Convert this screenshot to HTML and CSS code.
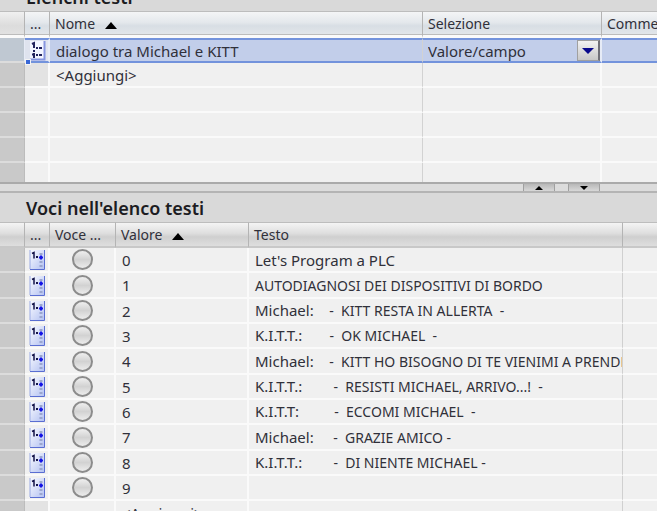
FILE: index.html
```html
<!DOCTYPE html>
<html lang="it">
<head>
    <meta charset="UTF-8">
    <title>Elenchi testi</title>
    <link rel="stylesheet" href="styles.css">
</head>
<body>
    <svg class="defs" aria-hidden="true">
        <defs>
            <linearGradient id="page" x1="0" y1="0" x2="1" y2="1">
                <stop offset="0" stop-color="#fafbff"/>
                <stop offset="1" stop-color="#b4c2f2"/>
            </linearGradient>
        </defs>
        <symbol id="entry" viewBox="0 0 17 21">
            <rect x="1" y="1" width="14" height="19" fill="url(#page)"/>
            <path d="M1 1v19" stroke="#9aaae4"/>
            <path d="M15.500 1v19.500H1" fill="none" stroke="#5a6ed2"/>
            <path d="M3 4.500l2-1v6" fill="none" stroke="#15154a" stroke-width="1.500"/>
            <rect x="7" y="7" width="2" height="2" fill="#15154a"/>
            <path d="M12 4v2M12 12v2M12 16v2" stroke="#9aa6d0" stroke-width="3"/>
            <path d="M12 6.500v4M10 8.500h4" stroke="#1414e6" stroke-width="2"/>
        </symbol>
        <symbol id="list" viewBox="0 0 17 21">
            <rect x="1" y="1" width="14" height="18" fill="#f3f5ff"/>
            <path d="M15.500 1v18.500H1" fill="none" stroke="#8796e0" stroke-width="2"/>
            <path d="M3 4l2-1v5M5 10v2M3 14.500h2M5 13v5" fill="none" stroke="#22225c" stroke-width="2"/>
            <path d="M7 8h2M10 8h3M7 15h2M10 15h3" stroke="#22225c" stroke-width="2"/>
        </symbol>
    </svg>

    <main class="editor">
        <section class="pane lists">
            <h2 class="pane-title">Elenchi testi</h2>
            <table class="grid">
                <colgroup>
                    <col class="c-gutter"><col class="c-icon"><col class="c-name"><col class="c-select"><col>
                </colgroup>
                <thead>
                    <tr>
                        <th></th>
                        <th class="dots">...</th>
                        <th>Nome <svg class="sort" viewBox="0 0 12 7"><path d="M6 0l6 7H0z"/></svg></th>
                        <th>Selezione</th>
                        <th>Commento</th>
                    </tr>
                </thead>
                <tbody>
                    <tr class="selected">
                        <td class="gutter"></td>
                        <td class="icon-cell"><svg class="icon"><use href="#list"/></svg><span class="handle"></span></td>
                        <td>dialogo tra Michael e KITT</td>
                        <td class="select-cell">
                            <select class="combo" aria-label="Selezione"><option>Valore/campo</option></select>
                            <span class="combo-arrow"><svg viewBox="0 0 12 6"><path d="M0 0h12L6 6z"/></svg></span>
                        </td>
                        <td></td>
                    </tr>
                    <tr><td class="gutter"></td><td class="new"></td><td>&lt;Aggiungi&gt;</td><td></td><td></td></tr>
                    <tr><td class="gutter"></td><td></td><td></td><td></td><td></td></tr>
                    <tr><td class="gutter"></td><td></td><td></td><td></td><td></td></tr>
                    <tr><td class="gutter"></td><td></td><td></td><td></td><td></td></tr>
                    <tr><td class="gutter"></td><td></td><td></td><td></td><td></td></tr>
                </tbody>
            </table>
        </section>

        <div class="splitter">
            <button class="split-btn" aria-label="Espandi sopra"><svg viewBox="0 0 8 4"><path d="M4 0l4 4H0z"/></svg></button>
            <button class="split-btn" aria-label="Espandi sotto"><svg viewBox="0 0 8 4"><path d="M0 0h8L4 4z"/></svg></button>
        </div>

        <section class="pane entries">
            <h2 class="pane-title">Voci nell'elenco testi</h2>
            <table class="grid">
                <colgroup>
                    <col class="c-gutter"><col class="c-icon"><col class="c-default"><col class="c-value"><col class="c-text"><col>
                </colgroup>
                <thead>
                    <tr>
                        <th></th>
                        <th class="dots">...</th>
                        <th>Voce ...</th>
                        <th>Valore <svg class="sort" viewBox="0 0 12 7"><path d="M6 0l6 7H0z"/></svg></th>
                        <th>Testo</th>
                        <th></th>
                    </tr>
                </thead>
                <tbody>
                    <tr>
                        <td class="gutter"></td>
                        <td class="icon-cell"><svg class="icon"><use href="#entry"/></svg></td>
                        <td class="radio-cell"><input type="radio" name="voce" aria-label="Voce 0"></td>
                        <td>0</td>
                        <td class="text">Let's Program a PLC</td>
                        <td></td>
                    </tr>
                    <tr>
                        <td class="gutter"></td>
                        <td class="icon-cell"><svg class="icon"><use href="#entry"/></svg></td>
                        <td class="radio-cell"><input type="radio" name="voce" aria-label="Voce 1"></td>
                        <td>1</td>
                        <td class="text"><span class="caps">AUTODIAGNOSI DEI DISPOSITIVI DI BORDO</span></td>
                        <td></td>
                    </tr>
                    <tr>
                        <td class="gutter"></td>
                        <td class="icon-cell"><svg class="icon"><use href="#entry"/></svg></td>
                        <td class="radio-cell"><input type="radio" name="voce" aria-label="Voce 2"></td>
                        <td>2</td>
                        <td class="text">Michael:    <span class="caps">-  KITT RESTA IN ALLERTA  -</span></td>
                        <td></td>
                    </tr>
                    <tr>
                        <td class="gutter"></td>
                        <td class="icon-cell"><svg class="icon"><use href="#entry"/></svg></td>
                        <td class="radio-cell"><input type="radio" name="voce" aria-label="Voce 3"></td>
                        <td>3</td>
                        <td class="text">K.I.T.T.:       <span class="caps">-  OK MICHAEL  -</span></td>
                        <td></td>
                    </tr>
                    <tr>
                        <td class="gutter"></td>
                        <td class="icon-cell"><svg class="icon"><use href="#entry"/></svg></td>
                        <td class="radio-cell"><input type="radio" name="voce" aria-label="Voce 4"></td>
                        <td>4</td>
                        <td class="text">Michael:    <span class="caps">-  KITT HO BISOGNO DI TE VIENIMI A PRENDERE</span></td>
                        <td></td>
                    </tr>
                    <tr>
                        <td class="gutter"></td>
                        <td class="icon-cell"><svg class="icon"><use href="#entry"/></svg></td>
                        <td class="radio-cell"><input type="radio" name="voce" aria-label="Voce 5"></td>
                        <td>5</td>
                        <td class="text">K.I.T.T.:        <span class="caps">-  RESISTI MICHAEL, ARRIVO...!  -</span></td>
                        <td></td>
                    </tr>
                    <tr>
                        <td class="gutter"></td>
                        <td class="icon-cell"><svg class="icon"><use href="#entry"/></svg></td>
                        <td class="radio-cell"><input type="radio" name="voce" aria-label="Voce 6"></td>
                        <td>6</td>
                        <td class="text">K.I.T.T:         <span class="caps">-  ECCOMI MICHAEL  -</span></td>
                        <td></td>
                    </tr>
                    <tr>
                        <td class="gutter"></td>
                        <td class="icon-cell"><svg class="icon"><use href="#entry"/></svg></td>
                        <td class="radio-cell"><input type="radio" name="voce" aria-label="Voce 7"></td>
                        <td>7</td>
                        <td class="text">Michael:     <span class="caps">-  GRAZIE AMICO -</span></td>
                        <td></td>
                    </tr>
                    <tr>
                        <td class="gutter"></td>
                        <td class="icon-cell"><svg class="icon"><use href="#entry"/></svg></td>
                        <td class="radio-cell"><input type="radio" name="voce" aria-label="Voce 8"></td>
                        <td>8</td>
                        <td class="text">K.I.T.T.:        <span class="caps">-  DI NIENTE MICHAEL -</span></td>
                        <td></td>
                    </tr>
                    <tr>
                        <td class="gutter"></td>
                        <td class="icon-cell"><svg class="icon"><use href="#entry"/></svg></td>
                        <td class="radio-cell"><input type="radio" name="voce" aria-label="Voce 9"></td>
                        <td>9</td>
                        <td class="text"></td>
                        <td></td>
                    </tr>
                    <tr>
                        <td class="gutter"></td>
                        <td class="new"></td>
                        <td></td>
                        <td>&lt;Aggiungi&gt;</td>
                        <td class="text"></td>
                        <td></td>
                    </tr>
                </tbody>
            </table>
        </section>
    </main>
</body>
</html>
```
FILE: styles.css
```css
* {
    box-sizing: border-box;
}

body {
    margin: 0;
    height: 100vh;
    overflow: hidden;
    background: #f0f0f0;
    color: #30303a;
    font-family: 'Noto Sans', 'Open Sans', sans-serif;
    font-size: 15px;
    line-height: 20px;
}

.defs {
    position: absolute;
    width: 0;
    height: 0;
}

.editor {
    display: flex;
    flex-direction: column;
    margin-top: -18px;
}

.pane-title {
    margin: 0;
    padding: 5px 26px 4px;
    height: 29px;
    background: #d9d9d9;
    color: #1c1c22;
    font-size: 18px;
    font-weight: 600;
    line-height: 20px;
}

.grid {
    width: 100%;
    table-layout: fixed;
    border-collapse: separate;
    border-spacing: 0;
}

.c-gutter {
    width: 25px;
}

.c-icon {
    width: 25px;
}

.c-name {
    width: 373px;
}

.c-select {
    width: 179px;
}

.c-default {
    width: 66px;
}

.c-value {
    width: 133px;
}

.c-text {
    width: 374px;
}

th {
    height: 26px;
    padding: 0 0 0 5px;
    border-top: 1px solid #bdbdbd;
    border-right: 1px solid #b4b4b4;
    border-bottom: 2px solid #c8c8c8;
    background: linear-gradient(#f4f4f4, #dedede 45%, #cfcfcf 60%, #dedede);
    font-size: 14px;
    font-weight: 400;
    text-align: left;
    white-space: nowrap;
    overflow: hidden;
}

.lists th {
    height: 27px;
    border-bottom: 3px solid #fafafa;
    background: linear-gradient(#f4f5f6, #e4e8ec 45%, #d8dee4 60%, #e2e6ea) padding-box;
    box-shadow: inset 0 -1px #bcbcbc;
}

.lists th:first-child {
    background: linear-gradient(#f0f0f0, #dcdcdc 60%, #e2e2e2) padding-box;
}

th:last-child {
    border-right: none;
}

.sort {
    width: 12px;
    height: 7px;
    margin-left: 6px;
    fill: #000;
}

td {
    height: 25px;
    padding: 0 0 0 6px;
    border-right: 2px solid #fafafa;
    border-bottom: 2px solid #fafafa;
    background: #f0f0f0;
    white-space: nowrap;
    overflow: hidden;
}

.entries tr:nth-child(3n+2) td {
    height: 26px;
}

td:last-child {
    border-right: none;
}

.gutter {
    border-right: 1px solid #bcbcbc;
    border-bottom: 2px solid #dcdcdc;
    background: #c9c9c9;
}

.new {
    background: #e3e3e3;
}

.lists td:nth-child(3) {
    border-right: 1px solid #d2d2d2;
}

.icon-cell {
    padding: 0 0 0 4px;
}

.icon {
    display: block;
    width: 17px;
    height: 21px;
}

.selected td {
    border-top: 2px solid #7393dc;
    border-bottom: 2px solid #7393dc;
    border-right-color: #e6ebf6;
    background: #c2ceea;
}

.selected .gutter {
    border-top-color: #bfc8d2;
    border-bottom-color: #dcdcdc;
    background: #bfc8d2;
}

.selected .icon-cell {
    position: relative;
    background: #dfe3ee;
    overflow: visible;
}

.handle {
    position: absolute;
    left: 0;
    bottom: -4px;
    width: 6px;
    height: 6px;
    border: 1px solid #f4f4f4;
    background: #3867d6;
}

.selected .select-cell {
    position: relative;
    padding: 0;
}

.combo {
    display: block;
    width: 100%;
    height: 21px;
    padding: 0 24px 0 5px;
    border: none;
    background: transparent;
    color: inherit;
    font: inherit;
    appearance: none;
}

.combo-arrow {
    position: absolute;
    top: 0;
    right: 0;
    bottom: 0;
    display: flex;
    align-items: center;
    justify-content: center;
    width: 23px;
    border: 1px solid #a0a0a0;
    border-right: 2px solid #707078;
    background: linear-gradient(#f2f2f2, #c8c8c8);
    pointer-events: none;
}

.combo-arrow svg {
    width: 12px;
    height: 6px;
    fill: #0a0a8c;
}

.splitter {
    display: flex;
    justify-content: flex-end;
    gap: 13px;
    height: 11px;
    padding-right: 57px;
    border-top: 2px solid #aaaaaa;
    border-bottom: 2px solid #b4b4b4;
    background: #dcdcdc;
}

.split-btn {
    display: flex;
    align-items: center;
    justify-content: center;
    width: 32px;
    height: 7px;
    padding: 0;
    border: 1px solid #a0a0a0;
    border-top: none;
    border-bottom: none;
    background: linear-gradient(#b8b8b8, #d8d8d8);
}

.split-btn svg {
    width: 8px;
    height: 4px;
    fill: #000;
}

.lists {
    height: 200px;
    overflow: hidden;
}

.radio-cell {
    padding: 0;
    text-align: center;
}

.radio-cell input {
    display: block;
    width: 21px;
    height: 21px;
    margin: 0 auto;
    border: 2px solid #8c8c8c;
    border-radius: 50%;
    background: linear-gradient(#efefef, #d2d2d2 50%, #ececec);
    appearance: none;
}

.text {
    white-space: pre;
}

.caps {
    font-size: 14px;
}

.entries td:nth-child(5) {
    border-right: 1px solid #d0d0d0;
}
```
